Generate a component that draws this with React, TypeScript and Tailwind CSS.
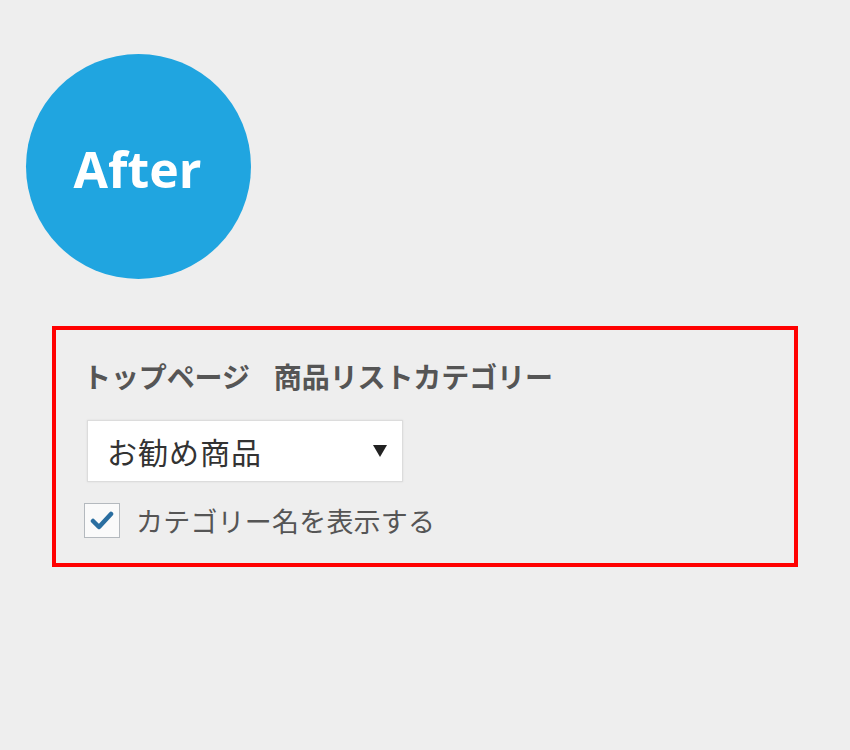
import React from "react";

export default function App() {
  return (
    <div className="w-[850px] h-[750px] bg-[#eeeeee] overflow-hidden flex flex-col" style={{ fontFamily: '"Noto Sans CJK JP", "Noto Sans", sans-serif' }}>
      <div className="ml-[26px] mt-[54px] w-[225px] h-[225px] rounded-full bg-[#20a5e0] flex items-center justify-center">
        <span className="text-white font-bold text-[50px] leading-none pt-[4px] ml-[-2px]" style={{ fontFamily: '"Open Sans", sans-serif' }}>After</span>
      </div>
      <div className="ml-[52px] mt-[47px] w-[746px] h-[241px] border-4 border-[#ff0000] flex flex-col pl-[27px] pt-[26px]">
        <div className="flex items-center text-[28px] leading-[40px] font-bold text-[#555] tracking-[-0.1px]">
          <span>トップページ</span>
          <span className="ml-[24px]">商品リストカテゴリー</span>
        </div>
        <div className="mt-[24px] ml-[4px] w-[316px] h-[62px] bg-white border border-[#dcdcdc] shadow-[0_0_2px_rgba(0,0,0,0.08)] flex items-center justify-between pl-[19px] pr-[15px]">
          <span className="text-[30px] leading-none text-[#333] font-normal tracking-[1px]">お勧め商品</span>
          <svg width="14" height="12" viewBox="0 0 14 12"><path d="M0 0 H14 L7 12 Z" fill="#222" /></svg>
        </div>
        <div className="mt-[21px] ml-[1px] flex items-center">
          <div className="w-[36px] h-[35px] bg-[#fafafa] border border-[#b4b9be] flex items-center justify-center">
            <svg width="24" height="20" viewBox="0 0 24 20"><path d="M3 10 L9 16 L21 3" fill="none" stroke="#2a6ea0" strokeWidth="4.5" strokeLinecap="round" strokeLinejoin="round" /></svg>
          </div>
          <span className="ml-[16px] text-[27px] leading-none text-[#555] tracking-[0.2px]">カテゴリー名を表示する</span>
        </div>
      </div>
    </div>
  );
}
